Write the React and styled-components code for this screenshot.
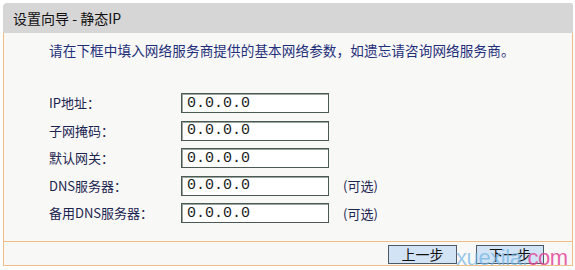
import React from "react"
import styled, { createGlobalStyle } from "styled-components"

const GlobalStyle = createGlobalStyle`
    html, body {
        margin: 0;
        padding: 0;
        background: #ffffff;
    }
    body {
        font-family: "Noto Sans CJK SC", "Liberation Sans", sans-serif;
    }
`

const Frame = styled.div`
    position: relative;
    width: 570px;
    margin: 3px 0 0 3px;
`
const Header = styled.div`
    height: 30px;
    background: #d6d6d6;
    border-top-left-radius: 4px;
    border-top-right-radius: 2px;
    display: flex;
    align-items: center;
    padding-left: 10px;
    font-size: 14px;
    color: #111;
`
const Content = styled.div`
    height: 208px;
    box-sizing: border-box;
    background: #f8f8f6;
    border-left: 1px solid #efbd87;
    border-right: 1px solid #efbd87;
    padding: 8px 0 0 45px;
`
const Intro = styled.div`
    font-size: 13.6px;
    line-height: 18px;
    color: #1f2f7a;
    letter-spacing: 0.1px;
`
const Form = styled.div`
    margin-top: 34px;
    display: grid;
    grid-template-columns: 132px 148px auto;
    grid-auto-rows: 20px;
    row-gap: 7.5px;
    align-items: center;
`
const Label = styled.div`
    font-size: 13px;
    color: #1c2450;
    line-height: 20px;
`
const Field = styled.div`
    height: 20px;
    box-sizing: border-box;
    border: 1px solid #4a5a52;
    box-shadow: inset 1px 1px 0 #9aa59f;
    background: #ffffff;
    display: flex;
    align-items: center;
    padding-left: 5px;
    font-family: "Liberation Mono", monospace;
    font-size: 15px;
    color: #1a1a1a;
`
const Note = styled.div`
    font-size: 13px;
    color: #1c2450;
    padding-left: 14px;
`
const Footer = styled.div`
    height: 25px;
    box-sizing: border-box;
    background: #f8f8f6;
    border: 1px solid #efbd87;
    display: flex;
    justify-content: flex-end;
    align-items: center;
    gap: 19px;
    padding: 1px 28px 0 0;
`
const Button = styled.div`
    width: ${p => p.$w}px;
    height: 19px;
    box-sizing: border-box;
    background: #d3e3f6;
    border: 1px solid #4d5a66;
    display: flex;
    align-items: center;
    justify-content: center;
    font-size: 14px;
    color: #111;
`
const Watermark = styled.div`
    position: absolute;
    left: 453px;
    top: 243px;
    font-family: "Liberation Sans", sans-serif;
    font-size: 22px;
    letter-spacing: -0.4px;
    line-height: 24px;
    pointer-events: none;
    white-space: nowrap;
`
const Blue = styled.span`
    color: rgba(110, 180, 228, 0.7);
`
const Pink = styled.span`
    color: rgba(225, 70, 150, 0.85);
`

const rows = [
    { label: "IP地址：" },
    { label: "子网掩码：" },
    { label: "默认网关：" },
    { label: "DNS服务器：", note: "(可选)" },
    { label: "备用DNS服务器：", note: "(可选)" },
]

export default function App() {
    return (
        <>
            <GlobalStyle />
            <Frame>
                <Header>设置向导 - 静态IP</Header>
                <Content>
                    <Intro>请在下框中填入网络服务商提供的基本网络参数，如遗忘请咨询网络服务商。</Intro>
                    <Form>
                        {rows.map(r => (
                            <React.Fragment key={r.label}>
                                <Label>{r.label}</Label>
                                <Field>0.0.0.0</Field>
                                <Note>{r.note}</Note>
                            </React.Fragment>
                        ))}
                    </Form>
                </Content>
                <Footer>
                    <Button $w={69}>上一步</Button>
                    <Button $w={68}>下一步</Button>
                </Footer>
                <Watermark><Blue>xuexila.</Blue><Pink>com</Pink></Watermark>
            </Frame>
        </>
    )
}
